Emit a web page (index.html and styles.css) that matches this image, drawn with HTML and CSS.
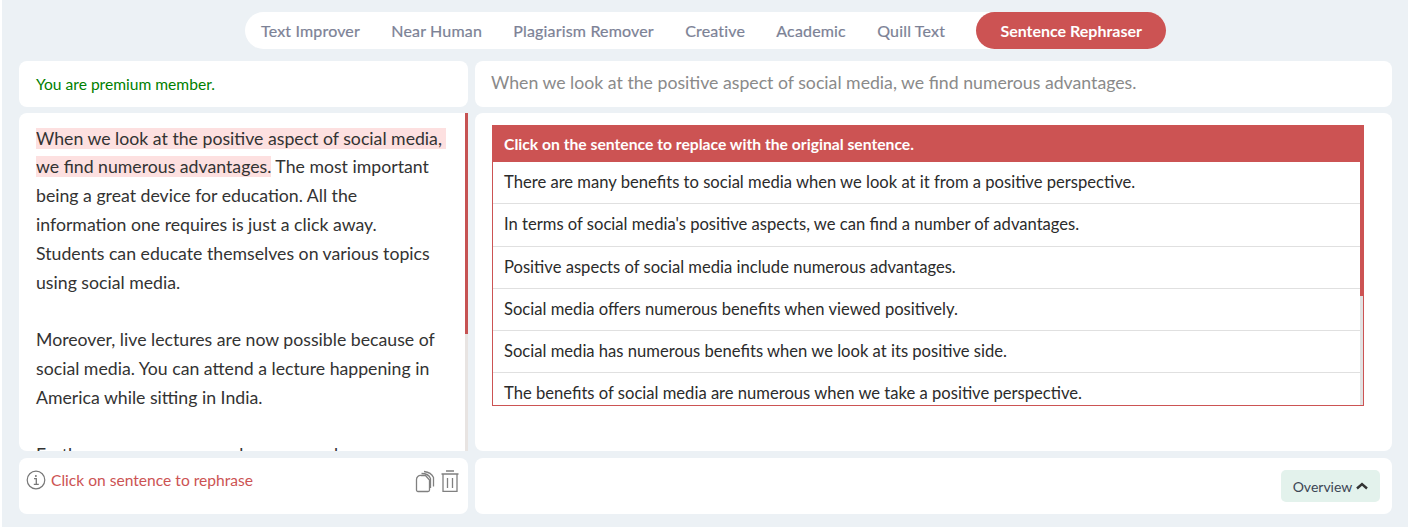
FILE: index.html
```html
<!DOCTYPE html>
<html lang="en">
<head>
    <meta charset="UTF-8">
    <meta name="viewport" content="width=device-width, initial-scale=1.0">
    <title>Sentence Rephraser</title>
    <link rel="stylesheet" href="styles.css">
</head>
<body>
    <div class="page">
        <nav class="tabs">
            <a class="tab">Text Improver</a>
            <a class="tab">Near Human</a>
            <a class="tab">Plagiarism Remover</a>
            <a class="tab">Creative</a>
            <a class="tab">Academic</a>
            <a class="tab">Quill Text</a>
            <a class="tab active">Sentence Rephraser</a>
        </nav>

        <div class="grid">
            <div class="card status">You are premium member.</div>
            <div class="card selected">When we look at the positive aspect of social media, we find numerous advantages.</div>

            <div class="card editor">
                <p><span class="mark">When we look at the positive aspect of social media, we find numerous advantages.</span> The most important being a great device for education. All the information one requires is just a click away. Students can educate themselves on various topics using social media.</p>
                <p>Moreover, live lectures are now possible because of social media. You can attend a lecture happening in America while sitting in India.</p>
                <p>Furthermore, you can reach a new mark</p>
                <div class="track"></div>
                <div class="thumb editor-thumb"></div>
            </div>

            <div class="card results">
                <div class="box">
                    <div class="box-head">Click on the sentence to replace with the original sentence.</div>
                    <ul class="options">
                        <li>There are many benefits to social media when we look at it from a positive perspective.</li>
                        <li>In terms of social media's positive aspects, we can find a number of advantages.</li>
                        <li>Positive aspects of social media include numerous advantages.</li>
                        <li>Social media offers numerous benefits when viewed positively.</li>
                        <li>Social media has numerous benefits when we look at its positive side.</li>
                        <li>The benefits of social media are numerous when we take a positive perspective.</li>
                    </ul>
                    <div class="track box-track"></div>
                    <div class="thumb box-thumb"></div>
                </div>
            </div>

            <div class="card foot foot-left">
                <div class="hint">
                    <svg class="info" viewBox="0 0 20 20" width="20" height="20" fill="none" stroke="#777" stroke-width="1.2">
                        <circle cx="10" cy="10" r="8.8"/>
                        <path d="M8 8.7h2.3v5.6M7.8 14.4h5" stroke-width="1.3"/>
                        <circle cx="9.9" cy="5.9" r="1" fill="#777" stroke="none"/>
                    </svg>
                    <span>Click on sentence to rephrase</span>
                </div>
                <div class="tools">
                    <svg viewBox="0 0 20 24" width="20" height="24" fill="none" stroke="#808080" stroke-width="1.3">
                        <path d="M6 5.5h4.5l4 4.5V20a1.5 1.5 0 0 1-1.5 1.5H3A1.5 1.5 0 0 1 1.5 20V9.5a4 4 0 0 1 4.5-4z"/>
                        <path d="M6.5 3.5c4 0 7.5 1 9 5v9.5"/>
                        <path d="M9 1.5c4 .5 8 2.5 9.5 6v9"/>
                    </svg>
                    <svg viewBox="0 0 18 24" width="18" height="24" fill="none" stroke="#808080" stroke-width="1.3">
                        <path d="M5 1h8M.5 4h17M2 4v17.4h14V4M6.5 8v10M11.5 8v10"/>
                    </svg>
                </div>
            </div>

            <div class="card foot foot-right">
                <button class="overview">Overview
                    <svg viewBox="0 0 12 8" width="12" height="8" fill="none" stroke="#333" stroke-width="2.4"><path d="M1 6.5l5-4.5 5 4.5"/></svg>
                </button>
            </div>
        </div>
    </div>
</body>
</html>
```

FILE: styles.css
```css
html, body {
    margin: 0;
    padding: 0;
    height: 100%;
    background-color: #fff;
    font-family: Lato, "Open Sans", sans-serif;
    overflow: hidden;
}

.page {
    margin-left: 2px;
    height: 527px;
    padding-top: 12px;
    box-sizing: border-box;
    background-color: #ecf1f5;
}

.tabs {
    display: flex;
    width: 921px;
    height: 37px;
    margin-left: 243px;
    padding-left: 16px;
    box-sizing: border-box;
    align-items: center;
    background-color: #fff;
    border-radius: 19px;
}

.tab {
    margin-right: 31.3px;
    font-size: 16px;
    letter-spacing: 0.17px;
    -webkit-text-stroke: 0.2px;
    color: #7c8296;
    white-space: nowrap;
}

.tab.active {
    margin-right: 0;
    margin-left: auto;
    width: 206px;
    height: 37px;
    line-height: 38px;
    text-align: center;
    color: #fff;
    font-weight: 700;
    letter-spacing: 0;
    -webkit-text-stroke: 0;
    background-color: #cc5353;
    border-radius: 19px;
}

.grid {
    display: grid;
    grid-template-columns: 449px 917px;
    grid-template-rows: 46px 338px 57px;
    column-gap: 7px;
    row-gap: 6px;
    margin: 12px 0 0 17px;
}

.card {
    background-color: #fff;
    border-radius: 8px;
    box-sizing: border-box;
}

.status {
    padding: 14px 17px;
    font-size: 15.6px;
    line-height: 18px;
    color: #008000;
}

.selected {
    padding: 11px 16px;
    font-size: 17.7px;
    line-height: 22px;
    color: #8a8a8a;
}

.editor {
    position: relative;
    height: 338px;
    padding: 11.6px 20px 0 17px;
    overflow: hidden;
    font-size: 17.7px;
    line-height: 28.8px;
    color: #333;
    border-radius: 8px 0 0 8px;
}

.editor p {
    margin: 0 0 28.8px;
}

.mark {
    background-color: #fde0e0;
    white-space: pre-wrap;
}

/* headless browser hides real scrollbars, so these are drawn over the panel */
.track,
.thumb {
    position: absolute;
    right: 0;
    width: 3px;
}

.track {
    top: 0;
    bottom: 0;
    background-color: #e8e4e2;
}

.thumb {
    background-color: #c65353;
}

.editor-thumb {
    top: 0;
    height: 221px;
}

.results {
    padding: 12px 28px 0 17px;
}

.box {
    position: relative;
    height: 281px;
    border: 1px solid #cc5353;
    box-sizing: border-box;
    display: flex;
    flex-direction: column;
}

.box-head {
    flex: none;
    height: 36px;
    padding: 0 11px;
    line-height: 37px;
    font-size: 15.7px;
    font-weight: 700;
    color: #fff;
    background-color: #cc5353;
}

.options {
    flex: 1;
    margin: 0;
    padding: 0 3px 0 0;
    list-style: none;
    overflow: hidden;
}

.options li {
    height: 42.25px;
    padding: 0 11px;
    line-height: 40.5px;
    box-sizing: border-box;
    font-size: 16.6px;
    color: #2b2b2b;
    border-bottom: 1px solid #e0e0e0;
}

.box-track {
    top: 36px;
    background-color: #e2e2e2;
}

.box-thumb {
    top: 36px;
    height: 134px;
    background-color: #cc5353;
}

.foot {
    height: 56px;
    margin-top: 1px;
}

.foot-left {
    display: flex;
    justify-content: space-between;
    align-items: flex-start;
    padding: 11px 9px 0 7px;
}

.hint {
    display: flex;
    align-items: center;
    gap: 5px;
    font-size: 15.6px;
    line-height: 22px;
    color: #cc5353;
}

.tools {
    display: flex;
    gap: 6px;
    margin-top: 1px;
}

.foot-right {
    display: flex;
    justify-content: flex-end;
    padding: 12px 12px 0 0;
}

.overview {
    width: 99px;
    height: 32px;
    padding: 0;
    border: none;
    border-radius: 5px;
    background-color: #e3f2ec;
    font-family: inherit;
    font-size: 14px;
    color: #3c4654;
    display: flex;
    align-items: center;
    justify-content: center;
    gap: 4px;
}
```
